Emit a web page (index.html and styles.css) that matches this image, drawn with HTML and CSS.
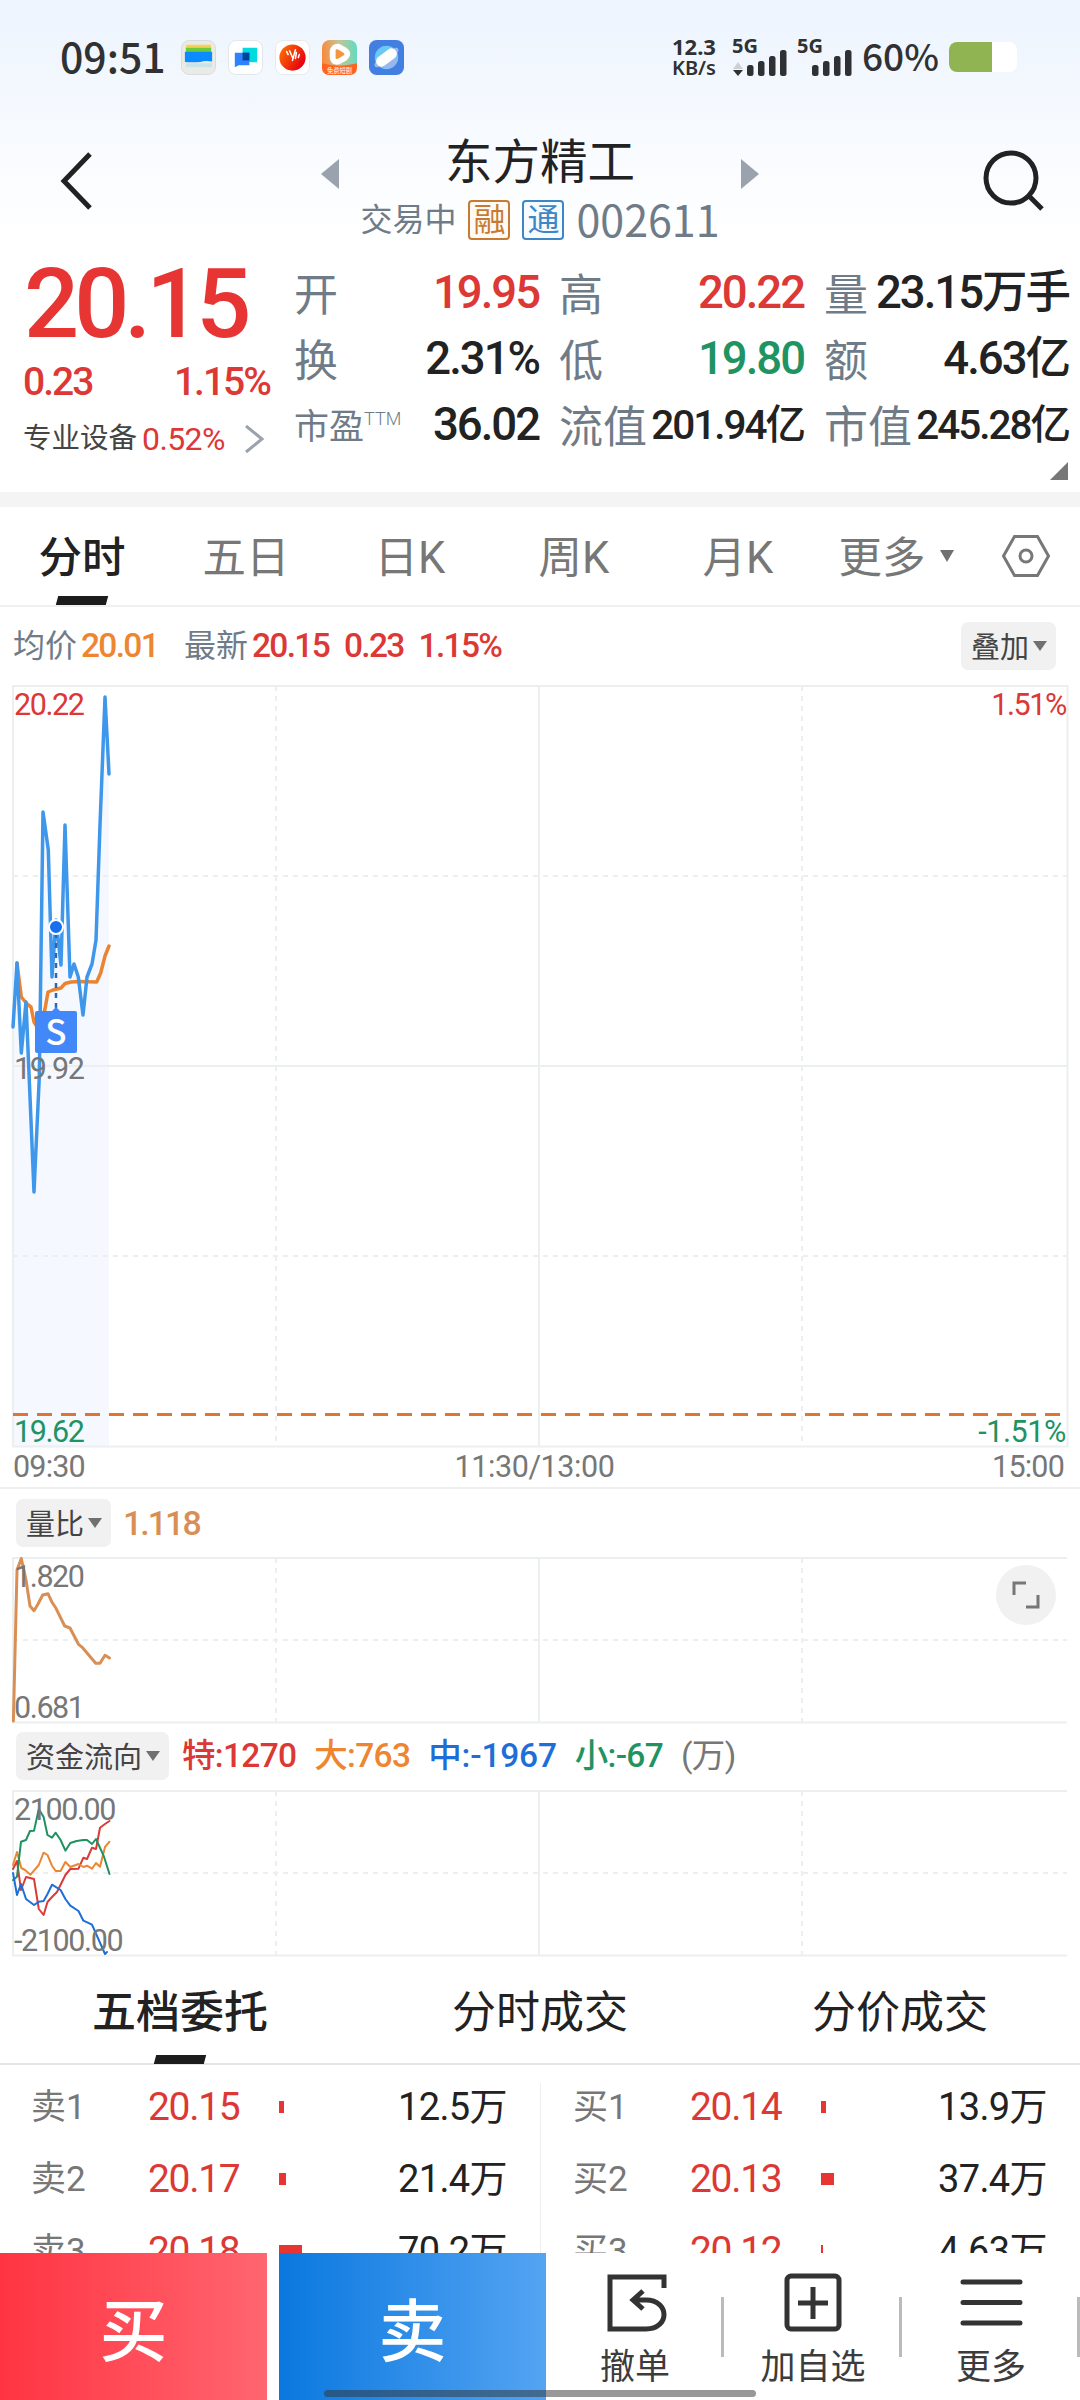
FILE: index.html
```
<!DOCTYPE html>
<html lang="zh-CN">
<head>
    <meta charset="UTF-8">
    <meta name="viewport" content="width=device-width, initial-scale=1.0">
    <title>东方精工 002611</title>
    <link rel="stylesheet" href="styles.css">
</head>
<body>
    <div class="status-bar">
        <span class="clock">09:51</span>
        <div class="app-icons">
            <svg viewBox="0 0 36 36"><rect x=".5" y=".5" width="35" height="35" rx="8" fill="#ebebe6" stroke="#d8dadc"/><rect x="5" y="5" width="26" height="6" rx="1" fill="#f7d154"/><rect x="5" y="8" width="26" height="6" fill="#6ccb3a"/><path d="M4 12h28v10q-8-1-12 .5-8 1-16 0z" fill="#0a8bff"/><path d="M5 24h27v4H5z" fill="#c9e3ea"/></svg>
            <svg viewBox="0 0 36 36"><rect x=".5" y=".5" width="35" height="35" rx="8" fill="#fff" stroke="#e1e4e8"/><path d="M15 8h15v15h-4l-11-1z" fill="#00dbe0"/><path d="M7 13h15v13H11l-4 2z" fill="#2b83ff"/><path d="M15 13h7v8h-7z" fill="#00439a"/></svg>
            <svg viewBox="0 0 36 36"><rect x=".5" y=".5" width="35" height="35" rx="8" fill="#fff" stroke="#e6e8eb"/><circle cx="18" cy="18" r="13.5" fill="url(#ball)"/><path d="M12 12l1.500 3M15 11l3 7M21 10l-3 11M22 13l-1 6M25 15l-1 3" stroke="#fff" stroke-width="1.600" stroke-linecap="round"/><defs><linearGradient id="ball" x2="1" y2=".6"><stop stop-color="#ff7a00"/><stop offset="1" stop-color="#e60012"/></linearGradient></defs></svg>
            <svg viewBox="0 0 36 36"><rect width="36" height="36" rx="8" fill="url(#play)"/><path d="M0 24q18 5 36 0v4q0 8-8 8H8q-8 0-8-8z" fill="#ff6420"/><path d="M8 11q2-8 10-7l7 4q8 6 0 13l-7 4q-8 2-10-6z" fill="#fff"/><path d="M14 10q1-1 3 0l5 3q2 1.500 0 3l-5 3q-2 1-3 0z" fill="#f5953c"/><text x="18" y="33.500" class="icon-caption">免费短剧</text><defs><linearGradient id="play" y1=".3" x2="1" y2=".2"><stop stop-color="#fa8a3c"/><stop offset=".5" stop-color="#c5c493"/><stop offset="1" stop-color="#5edcc4"/></linearGradient></defs></svg>
            <svg viewBox="0 0 36 36"><rect width="36" height="36" rx="8" fill="#437fe0"/><circle cx="18" cy="18" r="12" fill="#6bc8f5"/><path d="M8 24a12 12 0 0 0 22-6z" fill="#98b7ee"/><ellipse cx="18" cy="18" rx="15" ry="5" transform="rotate(-37 18 18)" fill="#98b7ee"/><rect x="6" y="12.500" width="24" height="11" rx="5.500" transform="rotate(-37 18 18)" fill="#fff"/></svg>
        </div>
        <div class="net-speed"><b>12.3</b><span>KB/s</span></div>
        <svg class="signal" viewBox="0 0 56 38"><text x="0" y="15">5G</text><path d="M1 31l5-7 5 7z" fill="#ccd0d5"/><path d="M1 32h10l-5 6z"/><rect x="15" y="27" width="6.500" height="11" rx="2.500"/><rect x="26" y="23" width="6.500" height="15" rx="2.500"/><rect x="37" y="18" width="6.500" height="20" rx="2.500"/><rect x="48" y="12" width="6.500" height="26" rx="2.500"/></svg>
        <svg class="signal" viewBox="0 0 56 38"><text x="0" y="15">5G</text><rect x="15" y="27" width="6.500" height="11" rx="2.500"/><rect x="26" y="23" width="6.500" height="15" rx="2.500"/><rect x="37" y="18" width="6.500" height="20" rx="2.500"/><rect x="48" y="12" width="6.500" height="26" rx="2.500"/></svg>
        <span class="battery-text">60%</span>
        <div class="battery"><div class="battery-level"></div></div>
    </div>

    <header class="nav">
        <svg class="back" viewBox="0 0 32 58"><path d="M29 2L3 29l26 27"/></svg>
        <svg class="arrow" viewBox="0 0 18 30"><path d="M18 0v30L0 15z"/></svg>
        <div class="nav-title">
            <h1>东方精工</h1>
            <div class="nav-sub">
                <span>交易中</span>
                <span class="badge badge-rong">融</span>
                <span class="badge badge-tong">通</span>
                <span class="code">002611</span>
            </div>
        </div>
        <svg class="arrow" viewBox="0 0 18 30"><path d="M0 0v30l18-15z"/></svg>
        <svg class="search" viewBox="0 0 62 62"><circle cx="28" cy="28" r="25"/><path d="M46 46l13 13"/></svg>
    </header>

    <section class="quote">
        <div class="quote-price">
            <div class="price">20.15</div>
            <div class="change"><span>0.23</span><span>1.15%</span></div>
            <div class="industry">专业设备<span>0.52%</span><svg viewBox="0 0 20 28"><path d="M2 1l16 13L2 27"/></svg></div>
        </div>
        <div class="quote-grid">
            <div class="cell"><label>开</label><b class="red">19.95</b></div>
            <div class="cell"><label>高</label><b class="red">20.22</b></div>
            <div class="cell"><label>量</label><b>23.15万手</b></div>
            <div class="cell"><label>换</label><b>2.31%</b></div>
            <div class="cell"><label>低</label><b class="green">19.80</b></div>
            <div class="cell"><label>额</label><b>4.63亿</b></div>
            <div class="cell"><label class="small">市盈<sup>TTM</sup></label><b>36.02</b></div>
            <div class="cell"><label>流值</label><b class="long">201.94亿</b></div>
            <div class="cell"><label>市值</label><b class="long">245.28亿</b></div>
        </div>
        <i class="corner"></i>
    </section>

    <nav class="period-tabs">
        <div class="tab active">分时</div>
        <div class="tab">五日</div>
        <div class="tab">日K</div>
        <div class="tab">周K</div>
        <div class="tab">月K</div>
        <div class="tab tab-more">更多<i class="caret"></i></div>
        <svg class="setting" viewBox="0 0 48 42"><path d="M12.500 1.500h23L46.500 21l-11 19.500h-23L1.500 21z"/><circle cx="24" cy="21" r="6"/></svg>
    </nav>

    <div class="chart-info">
        <label>均价</label><b class="orange">20.01</b>
        <label class="latest">最新</label><b class="red">20.15</b><b class="red">0.23</b><b class="red">1.15%</b>
        <button class="pill">叠加<i class="caret"></i></button>
    </div>

    <div class="chart chart-main">
        <svg viewBox="0 0 1080 762">
            <path class="area" d="M13 342L17 278 21.300 368 26 317 34 507 39.300 392 43 127 48.300 165 52 292 56 235 61 280 65 140 70 292 74 279 78.300 292 83 330 87 292 92 279 96 255 100 140 105 12 109 89V762H13z"/>
            <path class="grid" d="M12 1h1055.500v760.500H13V0M13 381h1054M539 1v760"/>
            <path class="grid dashed" d="M13 191h1054M13 571h1054M276 1v760M802 1v760"/>
            <path class="line orange-line" d="M17 278L21.300 312 27 319 31 322 34 337 39 345 45 324 48 307 53 305 61 303 65 298.500 71 297 80 296.500 96.700 297 100.700 288 105 271 109 261"/>
            <path class="line blue-line" d="M13 342L17 278 21.300 368 26 317 34 507 39.300 392 43 127 48.300 165 52 292 56 235 61 280 65 140 70 292 74 279 78.300 292 83 330 87 292 92 279 96 255 100 140 105 12 109 89"/>
            <path class="cost-line" d="M13 729.500h1054"/>
            <path class="trade-stem" d="M56 248v76"/>
            <circle class="trade-dot" cx="56" cy="242" r="7"/>
            <path class="trade-box" d="M37 326h15l4-4 4 4h15q2 0 2 2v38q0 2-2 2H37q-2 0-2-2v-38q0-2 2-2z"/>
            <text class="trade-text" x="56" y="360">S</text>
        </svg>
        <span class="axis top-left red">20.22</span>
        <span class="axis top-right red">1.51%</span>
        <span class="axis middle-left">19.92</span>
        <span class="axis bottom-left green">19.62</span>
        <span class="axis bottom-right green">-1.51%</span>
    </div>
    <div class="time-axis"><span>09:30</span><span>11:30/13:00</span><span>15:00</span></div>

    <div class="sub-head">
        <button class="pill">量比<i class="caret"></i></button>
        <b class="ratio">1.118</b>
    </div>
    <div class="chart chart-sub">
        <svg viewBox="0 0 1080 166">
            <path class="grid" d="M12 1h1055M13 165.500h1054M13 0v166M539 1v164"/>
            <path class="grid dashed" d="M13 83h1054M276 1v164M802 1v164"/>
            <path class="line ratio-line" d="M13.400 164L17 13 21.300 1.500 26 23 30 49 34 53.700 38 47 42.700 38 48 36.700 51.700 44.700 56 51.300 64.700 69 70 71 78.500 87.300 82.600 90.700 95.700 106.300 100 106.300 105 98.300 109.500 101"/>
        </svg>
        <span class="axis top-left">1.820</span>
        <span class="axis bottom-left">0.681</span>
        <div class="fullscreen"><svg viewBox="0 0 28 28"><path d="M2 14V2h12M26 14v12H14"/></svg></div>
    </div>

    <div class="sub-head sub-flow">
        <button class="pill">资金流向<i class="caret"></i></button>
        <b class="red">特:1270</b>
        <b class="orange">大:763</b>
        <b class="blue">中:-1967</b>
        <b class="green">小:-67</b>
        <span>(万)</span>
    </div>
    <div class="chart chart-sub">
        <svg viewBox="0 0 1080 166">
            <path class="grid" d="M12 1h1055M13 165.500h1054M13 0v166M539 1v164"/>
            <path class="grid dashed" d="M13 83h1054M276 1v164M802 1v164"/>
            <path class="line thin" stroke="#d83b38" d="M13 79L17 71 21 100 26 87 34 89 38.800 119 43.600 125 47.500 112 52 107 57 102 65.400 85 70.300 79 78.500 78.700 83.400 67.700 87 69 92 57.700 96 59 100 37.700 105 34 109.500 31"/>
            <path class="line thin" stroke="#ea8733" d="M13 75L17 62 21.300 78 25 80 30.500 84.700 38.800 75 43.600 62.700 47.500 65 52 75.700 55.700 81 60.600 81 65.400 72 70.300 77 78.500 74 83.400 77 87 75.700 92 78.700 96 73 100 76.700 105 57 109.500 51.700"/>
            <path class="line thin" stroke="#1f9160" d="M13 90L17 86.700 21 51.700 26 50 30 41 34 40.700 38.800 19 43.600 27 47.500 45 52 47.700 55.700 42.700 60.600 50 65.400 60.700 70.300 53 76.600 51 83.400 50 87 50 92 54 96 49 104 66.700 109.500 84"/>
            <path class="line thin" stroke="#1d6ed8" d="M13 83L17 105 21 94 26 109 34 115 38.800 111.700 43.600 111 47.500 104 52 94.700 60.600 100 65.400 109 70.300 115.700 78.500 121 83.400 130.700 92 134.700 105 164 107 162"/>
        </svg>
        <span class="axis top-left">2100.00</span>
        <span class="axis bottom-left">-2100.00</span>
    </div>

    <nav class="book-tabs">
        <div class="tab active">五档委托</div>
        <div class="tab">分时成交</div>
        <div class="tab">分价成交</div>
    </nav>
    <section class="book">
        <div class="book-side">
            <div class="order"><label>卖1</label><span class="red">20.15</span><i style="width:5px"></i><em>12.5万</em></div>
            <div class="order"><label>卖2</label><span class="red">20.17</span><i style="width:7px"></i><em>21.4万</em></div>
            <div class="order"><label>卖3</label><span class="red">20.18</span><i style="width:23px"></i><em>70.2万</em></div>
        </div>
        <div class="book-side">
            <div class="order"><label>买1</label><span class="red">20.14</span><i style="width:5px"></i><em>13.9万</em></div>
            <div class="order"><label>买2</label><span class="red">20.13</span><i style="width:13px"></i><em>37.4万</em></div>
            <div class="order"><label>买3</label><span class="red">20.12</span><i style="width:2px"></i><em>4.63万</em></div>
        </div>
    </section>

    <footer class="trade-bar">
        <button class="buy">买</button>
        <button class="sell">卖</button>
        <div class="action">
            <svg viewBox="0 0 60 60"><path d="M59 15V4H5v52h36c24 0 24-29 0-29H28M38 18l-10 9 10 9"/></svg>
            <span>撤单</span>
        </div>
        <div class="action">
            <svg viewBox="0 0 60 60"><rect x="4" y="3" width="52" height="53" rx="4"/><path d="M30 14v32M15 30h30"/></svg>
            <span>加自选</span>
        </div>
        <div class="action">
            <svg viewBox="0 0 60 60"><path d="M2 9h57M2 29.500h57M2 50h57" stroke-linecap="round"/></svg>
            <span>更多</span>
        </div>
        <div class="home-indicator"></div>
    </footer>
</body>
</html>
```
FILE: styles.css
```
* {
    box-sizing: border-box;
}
body {
    margin: 0;
    width: 1080px;
    height: 2400px;
    overflow: hidden;
    display: flex;
    flex-direction: column;
    font-family: Roboto, "Noto Sans CJK SC", sans-serif;
    line-height: 1;
    color: #222;
    background: linear-gradient(#edf4fe, #fff 240px);
}
svg {
    display: block;
    flex: none;
    overflow: visible;
}
button {
    border: none;
    padding: 0;
    font-family: inherit;
}
b {
    font-weight: 500;
}
.red { color: #dc3835; }
.green { color: #1f9362; }
.orange { color: #ee8530; }
.blue { color: #1d6ed8; }

/* ステータスバー */
.status-bar {
    height: 114px;
    padding-left: 60px;
    display: flex;
    align-items: center;
    color: #303133;
    flex: none;
}
.clock {
    width: 121px;
    margin-top: -5px;
    font-family: "Noto Sans CJK SC", sans-serif;
    font-size: 41px;
    font-weight: 500;
    line-height: 40px;
}
.app-icons {
    display: flex;
    gap: 12px;
    width: 491px;
}
.app-icons svg {
    width: 35px;
    height: 35px;
}
.icon-caption {
    font-size: 6.5px;
    fill: #fff;
    text-anchor: middle;
}
.net-speed {
    width: 60px;
    font-family: "Noto Sans", sans-serif;
    font-size: 22px;
    line-height: 20px;
    font-weight: 600;
}
.net-speed b {
    display: block;
    font-weight: 700;
}
.net-speed span {
    font-size: 20px;
}
.signal {
    width: 56px;
    height: 38px;
    margin-right: 9px;
    fill: #303133;
    font-family: "Noto Sans", sans-serif;
    font-size: 20px;
    font-weight: 700;
}
.battery-text {
    width: 87px;
    margin-top: -4px;
    font-family: "Noto Sans CJK SC", sans-serif;
    font-size: 37px;
    line-height: 36px;
    font-weight: 500;
}
.battery {
    width: 68px;
    height: 30px;
    border-radius: 8px;
    overflow: hidden;
    background: #fff;
}
.battery-level {
    width: 43px;
    height: 100%;
    background: #90b451;
}

/* ヘッダー */
.nav {
    height: 136px;
    display: flex;
    padding: 0 35px 0 61px;
    justify-content: space-between;
    flex: none;
}
.nav svg {
    fill: none;
    stroke: #222;
    stroke-width: 5;
}
.back {
    width: 32px;
    height: 58px;
    margin: 38px 228px 0 0;
}
.nav .arrow {
    width: 18px;
    height: 30px;
    margin-top: 45px;
    fill: #9aa3ad;
    stroke: none;
}
.search {
    width: 62px;
    height: 62px;
    margin: 36px 0 0 224px;
}
.nav-title {
    flex: 1;
    min-width: 0;
    display: flex;
    flex-direction: column;
    align-items: center;
}
h1 {
    margin: 25px 0 13px;
    font-size: 47.5px;
    line-height: 48px;
    font-weight: 400;
    white-space: nowrap;
}
.nav-sub {
    display: flex;
    align-items: center;
    height: 40px;
    font-size: 32px;
    color: #6f7c88;
    white-space: nowrap;
}
.badge {
    width: 42px;
    height: 40px;
    margin-left: 12px;
    border: 2px solid;
    border-radius: 4px;
    line-height: 37px;
    text-align: center;
}
.badge-rong {
    color: #c77a33;
    background: #fffaf3;
}
.badge-tong {
    color: #3f86c6;
    background: #f5fbff;
}
.code {
    margin: -4px 0 0 12px;
    font-family: "Noto Sans CJK SC", sans-serif;
    font-size: 43px;
    line-height: 40px;
}

/* 株価 */
.quote {
    position: relative;
    height: 257px;
    padding: 10px 11px 0 23px;
    border-bottom: 15px solid #f4f4f4;
    display: flex;
    background: #fff;
    flex: none;
}
.quote-price {
    width: 271px;
}
.price {
    margin-left: 1px;
    font-size: 97px;
    line-height: 88px;
    font-weight: 500;
    letter-spacing: -5px;
    color: #e63532;
}
.change {
    width: 247px;
    margin-top: 12px;
    display: flex;
    justify-content: space-between;
    font-size: 39px;
    line-height: 44px;
    font-weight: 500;
    letter-spacing: -2px;
    color: #dc3835;
}
.industry {
    margin-top: 18px;
    display: flex;
    align-items: center;
    font-size: 28.5px;
    line-height: 34px;
    color: #444;
}
.industry span {
    width: 102px;
    margin-left: 5px;
    font-size: 32px;
    letter-spacing: -.6px;
    color: #dc3835;
}
.industry svg {
    width: 20px;
    height: 28px;
    fill: none;
    stroke: #9aa3ad;
    stroke-width: 3;
}
.quote-grid {
    flex: 1;
    display: grid;
    grid-template-columns: repeat(3, 245px);
    grid-auto-rows: 66px;
    column-gap: 20px;
}
.cell {
    display: flex;
    align-items: center;
    justify-content: space-between;
    white-space: nowrap;
}
.cell label {
    font-size: 44px;
    line-height: 50px;
    padding-top: 6px;
    color: #6f7c88;
}
.cell label.small {
    font-size: 35px;
}
.cell sup {
    font-size: 18px;
    line-height: 0;
    font-weight: 300;
    vertical-align: 14px;
}
.cell b {
    font-size: 45.5px;
    letter-spacing: -2px;
}
.cell b.long {
    font-size: 40.5px;
}
.corner {
    position: absolute;
    right: 12px;
    bottom: 12px;
    border: 9px solid transparent;
    border-right-color: #777;
    border-bottom-color: #777;
}

/* 期間タブ */
.period-tabs {
    height: 100px;
    display: flex;
    align-items: center;
    border-bottom: 2px solid #f0f0f0;
    background: #fff;
    flex: none;
}
.tab {
    position: relative;
    width: 164px;
    height: 98px;
    line-height: 103px;
    font-size: 43.5px;
    text-align: center;
    color: #777;
}
.tab.active {
    font-weight: 500;
    color: #222;
}
.tab.active::after {
    content: "";
    position: absolute;
    left: 50%;
    bottom: 0;
    width: 50px;
    height: 9px;
    margin-left: -25px;
    background: #1c1c1c;
    transform: skewX(-15deg);
}
.tab-more {
    width: 154px;
    margin-left: -1px;
}
.caret {
    display: inline-block;
    margin-left: 4px;
    border: 7px solid transparent;
    border-top: 10px solid #707070;
    border-bottom: none;
    vertical-align: 7px;
}
.tab-more .caret {
    margin-left: 14px;
    border-top-width: 12px;
    vertical-align: 11px;
}
.setting {
    width: 48px;
    height: 42px;
    margin-left: 29px;
    fill: none;
    stroke: #777;
    stroke-width: 3;
}

/* チャート */
.chart-info {
    height: 78px;
    padding: 0 24px 0 13px;
    display: flex;
    align-items: center;
    font-size: 33.5px;
    background: #fff;
    flex: none;
}
.chart-info label {
    font-size: 32px;
    color: #6f7c88;
}
.chart-info .latest {
    margin-left: 15px;
}
.chart-info b {
    margin: 0 11px 0 4px;
    letter-spacing: -1.7px;
}
.pill {
    height: 48px;
    padding: 0 9px 2px 10px;
    border-radius: 7px;
    font-size: 29px;
    color: #444;
    background: #f1f1f1;
    white-space: nowrap;
}
.chart-info .pill {
    margin-left: auto;
}
.chart {
    position: relative;
    background: #fff;
    flex: none;
}
.chart-main {
    height: 762px;
}
.chart-sub {
    height: 166px;
}
.chart > svg {
    width: 1080px;
    height: 100%;
    fill: none;
}
.grid {
    stroke: #eceff0;
    stroke-width: 2;
}
.dashed {
    stroke-dasharray: 5 5;
}
.line {
    stroke-width: 3.5;
    stroke-linejoin: round;
    stroke-linecap: round;
}
.thin { stroke-width: 2; }
.blue-line { stroke: #3f97ec; }
.orange-line { stroke: #ea8433; }
.ratio-line { stroke: #d98f54; stroke-width: 3; }
.area { fill: #f5f9ff; }
.cost-line {
    stroke: #dd7632;
    stroke-width: 3;
    stroke-dasharray: 15 9;
}
.trade-stem {
    stroke: #2c68b0;
    stroke-width: 2.5;
    stroke-dasharray: 5 5;
}
.trade-dot {
    fill: #156fee;
    stroke: #fff;
    stroke-width: 2;
}
.trade-box { fill: #4388f8; }
.trade-text {
    fill: #fff;
    font-family: "Noto Sans CJK SC", sans-serif;
    font-size: 35px;
    font-weight: 500;
    text-anchor: middle;
}
.axis {
    position: absolute;
    font-size: 30.5px;
    line-height: 32px;
    letter-spacing: -1.4px;
}
.axis:not(.red):not(.green),
.time-axis {
    color: #777;
}
.top-left { left: 14px; top: 4px; }
.top-right { right: 14px; top: 4px; }
.middle-left { left: 14px; top: 368px; }
.bottom-left { left: 14px; bottom: -1px; }
.bottom-right { right: 14px; bottom: -1px; letter-spacing: -.4px; }
.time-axis {
    height: 42px;
    padding: 0 16px 0 13px;
    display: flex;
    justify-content: space-between;
    align-items: center;
    font-size: 30.5px;
    letter-spacing: -.8px;
    background: #fff;
    flex: none;
    border-bottom: 2px solid #eceff0;
}
.time-axis span:nth-child(2) {
    margin-right: 8px;
    letter-spacing: -.4px;
}
.sub-head {
    height: 68px;
    padding-left: 16px;
    display: flex;
    align-items: center;
    background: #fff;
    flex: none;
}
.sub-flow {
    height: 67px;
    padding-bottom: 2px;
}
.sub-head .ratio {
    margin-left: 12px;
    font-size: 34px;
    letter-spacing: -2px;
    color: #d98f54;
}
.sub-flow b,
.sub-flow span {
    margin-left: 18px;
    font-size: 33.5px;
    letter-spacing: -.7px;
    white-space: nowrap;
}
.sub-flow .red {
    margin-left: 13px;
}
.sub-flow .blue {
    letter-spacing: -.2px;
}
.sub-flow span {
    color: #777;
}
.fullscreen {
    position: absolute;
    left: 996px;
    top: 8px;
    width: 60px;
    height: 60px;
    border-radius: 50%;
    background: #f1f1f1;
    display: flex;
    align-items: center;
    justify-content: center;
}
.fullscreen svg {
    width: 28px;
    height: 28px;
    fill: none;
    stroke: #777;
    stroke-width: 3;
}

/* 板情報 */
.book-tabs {
    height: 109px;
    display: flex;
    border-bottom: 2px solid #e4e4e4;
    background: #fff;
    flex: none;
}
.book-tabs .tab {
    width: 360px;
    line-height: 114px;
    height: 108px;
    color: #222;
    font-size: 44px;
}
.book {
    flex: 1;
    min-height: 0;
    padding-top: 6px;
    display: flex;
    overflow: hidden;
    background: #fff;
}
.book-side {
    width: 540px;
}
.book-side + .book-side {
    border-left: 1px solid #eee;
    margin-top: 12px;
    padding-left: 1px;
}
.book-side + .book-side .order:first-child {
    margin-top: -12px;
}
.order {
    height: 72px;
    padding: 0 33px 0 31px;
    display: flex;
    align-items: center;
    font-size: 39px;
}
.order label {
    width: 117px;
    font-size: 35px;
    color: #777;
}
.order span {
    width: 131px;
    letter-spacing: -1.3px;
}
.order i {
    height: 12px;
    background: #e63532;
}
.order em {
    margin-left: auto;
    font-style: normal;
    font-size: 38px;
    letter-spacing: -.6px;
}

/* 下部バー */
.trade-bar {
    position: relative;
    height: 147px;
    display: flex;
    background: #fff;
    flex: none;
}
.buy,
.sell {
    width: 267px;
    font-size: 68px;
    font-weight: 500;
    color: #fff;
    padding-top: 0;
}
.buy {
    margin-right: 12px;
    background: linear-gradient(90deg, #ff3442, #ff6670);
}
.sell {
    background: linear-gradient(90deg, #0a78df, #54a4f2);
}
.action {
    position: relative;
    width: 178px;
    padding-top: 20px;
    display: flex;
    flex-direction: column;
    align-items: center;
    font-size: 35px;
    color: #3c3c3c;
}
.action::after {
    content: "";
    position: absolute;
    right: 0;
    top: 44px;
    width: 3px;
    height: 60px;
    background: #bbb;
}
.action svg {
    width: 60px;
    height: 60px;
    margin-bottom: 17px;
    fill: none;
    stroke: #333;
    stroke-width: 5;
}
.home-indicator {
    position: absolute;
    left: 324px;
    bottom: 3px;
    width: 432px;
    height: 7px;
    border-radius: 4px;
    background: rgba(50, 50, 50, .5);
}
```
